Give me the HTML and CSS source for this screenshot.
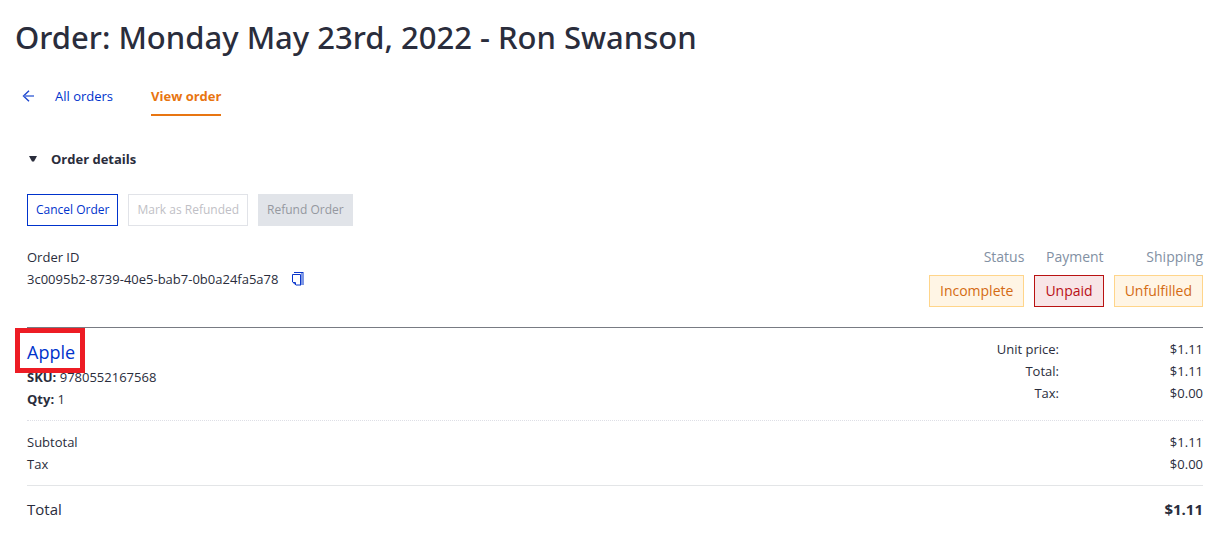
FILE: index.html
```html
<!DOCTYPE html>
<html lang="en">
<head>
<meta charset="utf-8">
<meta name="viewport" content="width=device-width, initial-scale=1">
<title>Order: Ron Swanson</title>
<link rel="stylesheet" href="styles.css">
</head>
<body>
<header class="page-header">
  <h1 class="page-title">Order: Monday May 23rd, 2022 - Ron Swanson</h1>
  <nav class="tabs" aria-label="Orders">
    <a class="tab tab-back" href="#orders">
      <svg class="icon-arrow" viewBox="0 0 12 12" width="12" height="12" aria-hidden="true"><path d="M7 .7 1.5 6 7 11.3" fill="none" stroke="#1d46cf" stroke-width="1.4"/><path d="M1.500 6H12" stroke="#5779dc" stroke-width="1.6"/></svg>
      <span>All orders</span>
    </a>
    <a class="tab tab-active" href="#order" aria-current="page">View order</a>
  </nav>
</header>
<main>
  <details class="order" open>
    <summary class="order-summary">
      <svg viewBox="0 0 8 6" width="8" height="6" aria-hidden="true"><path d="M0 0h8L5 5.5H3z" fill="#2a2d3c"/></svg>
      <span>Order details</span>
    </summary>
    <div class="order-body">
      <div class="actions">
        <button class="button button-outline" type="button">Cancel Order</button>
        <button class="button button-muted" type="button" disabled>Mark as Refunded</button>
        <button class="button button-filled" type="button" disabled>Refund Order</button>
      </div>
      <section class="overview">
        <div class="identity">
          <div>Order ID</div>
          <div class="identity-value">
            <span>3c0095b2-8739-40e5-bab7-0b0a24fa5a78</span>
            <button class="copy" type="button" aria-label="Copy order ID">
              <svg viewBox="0 0 12 14" width="12" height="14" aria-hidden="true"><path d="M9 0h3v13H9z" fill="#7f98e5"/><path d="M2 0h9v1H2z" fill="#0b37cb"/><path d="M.5 2.500h8V13H4L.5 10z" fill="#fff" stroke="#0b37cb"/><path d="M1 10.500h2.500V13" fill="none" stroke="#0b37cb"/><path d="M4 13h5v1H4z" fill="#7f98e5"/></svg>
            </button>
          </div>
        </div>
        <dl class="states">
          <div class="state"><dt>Status</dt><dd class="badge badge-warning">Incomplete</dd></div>
          <div class="state"><dt>Payment</dt><dd class="badge badge-danger">Unpaid</dd></div>
          <div class="state"><dt>Shipping</dt><dd class="badge badge-warning">Unfulfilled</dd></div>
        </dl>
      </section>
      <section class="item">
        <div class="item-info">
          <a class="item-name" href="#apple">Apple</a>
          <div><strong>SKU:</strong> 9780552167568</div>
          <div><strong>Qty:</strong> 1</div>
        </div>
        <dl class="prices">
          <dt>Unit price:</dt><dd>$1.11</dd>
          <dt>Total:</dt><dd>$1.11</dd>
          <dt>Tax:</dt><dd>$0.00</dd>
        </dl>
      </section>
      <dl class="sums">
        <div class="row"><dt>Subtotal</dt><dd>$1.11</dd></div>
        <div class="row"><dt>Tax</dt><dd>$0.00</dd></div>
      </dl>
      <dl class="row grand"><dt>Total</dt><dd>$1.11</dd></dl>
    </div>
  </details>
</main>
</body>
</html>
```
FILE: styles.css
```css
* { box-sizing: border-box; }

body {
  margin: 0;
  padding: 13px 17px 20px 15px;
  background: #fff;
  color: #2a2d3c;
  font: 13px/22px "Open Sans", "Noto Sans", sans-serif;
}

a { color: #0033cc; text-decoration: none; }
dl, dd { margin: 0; }

.page-title {
  margin: 0;
  font-family: "Noto Sans", "Open Sans", sans-serif;
  font-size: 31px;
  line-height: 48px;
  font-weight: 500;
}

.tabs {
  display: flex;
  align-items: flex-start;
  gap: 38px;
  padding: 24px 0 0 7px;
}
.tab { padding-bottom: 7px; border-bottom: 2px solid transparent; }
.tab-back { display: flex; align-items: center; gap: 21px; }
.tab-active { color: #e87511; font-weight: 700; border-color: #e87511; }

.order { padding-left: 12px; }
.order-summary {
  display: flex;
  align-items: center;
  gap: 14px;
  padding: 32px 0 24px 2px;
  font-weight: 700;
  list-style: none;
  cursor: pointer;
}

.actions { display: flex; flex-wrap: wrap; gap: 10px; }
.button {
  height: 32px;
  padding: 0 8px;
  border: 1px solid;
  background: #fff;
  font: inherit;
  font-size: 12px;
}
.button-outline { color: #0033cc; border-color: #0033cc; }
.button-muted { color: #bfbfc6; border-color: #e1e3e8; }
.button-filled { color: #95989f; background: #e1e4e9; border-color: #e1e4e9; }

.overview {
  display: flex;
  justify-content: space-between;
  align-items: flex-start;
  padding: 20px 0;
  border-bottom: 1px solid #787b83;
}
.identity-value { display: flex; align-items: center; gap: 14px; }
.copy { display: flex; padding: 0; border: 0; background: none; cursor: pointer; }

.states { display: flex; gap: 10px; text-align: right; }
.state { display: grid; gap: 7px; font-size: 14px; }
.state dt { color: #8290a3; }
.badge { padding: 4px 10px; border: 1px solid; }
.badge-warning { color: #d46b13; background: #fff5e5; border-color: #ffd58a; }
.badge-danger { color: #b80f16; background: #f8e5e7; border-color: #b91212; }

.item {
  display: flex;
  justify-content: space-between;
  padding: 10px 0;
  border-bottom: 1px dotted #dedfe6;
}
.item-name {
  position: relative;
  display: block;
  width: max-content;
  font-size: 18px;
  line-height: 28px;
}
.item-name::after {
  content: "";
  position: absolute;
  inset: -10px -10px -7px -12px;
  border: 5px solid #ed1c24;
}
.prices {
  display: grid;
  grid-template-columns: auto 144px;
  align-content: start;
  text-align: right;
}

.sums { padding: 10px 0; border-bottom: 1px solid #e3e5e7; }
.row { display: flex; justify-content: space-between; }
.grand { padding: 12px 0; font-size: 15px; }
.grand dd { font-weight: 700; }
```
